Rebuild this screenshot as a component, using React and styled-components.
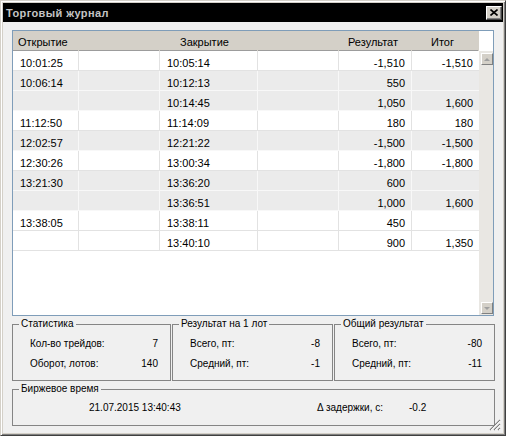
import React from 'react';
import styled, { createGlobalStyle } from 'styled-components';

const GlobalStyle = createGlobalStyle`
  html, body {
    margin: 0;
    padding: 0;
    background: #f0f0f0;
  }
  body {
    font-family: "Liberation Sans", Arial, sans-serif;
    color: #000;
  }
`;

const COLS = '66px 81px 98px 81px 73px 67px';

const Window = styled.div`
  position: relative;
  width: 506px;
  height: 436px;
  box-sizing: border-box;
  border: 1px solid;
  border-color: #d4d0c8 #404040 #404040 #d4d0c8;
  box-shadow: inset 1px 1px #ffffff, inset -1px -1px #808080;
  padding: 2px;
  background: #d4d0c8;
  display: flex;
  flex-direction: column;
`;

const TitleBar = styled.div`
  height: 19px;
  flex: none;
  background: #000;
  display: flex;
  align-items: center;
  justify-content: space-between;
  padding: 0 1px 0 3px;
`;

const Title = styled.span`
  font-size: 11px;
  font-weight: bold;
  letter-spacing: 0.4px;
  color: #c4c4c4;
`;

const CloseButton = styled.div`
  width: 16px;
  height: 14px;
  box-sizing: border-box;
  background: #d4d0c8;
  border: 1px solid;
  border-color: #ffffff #404040 #404040 #ffffff;
  box-shadow: inset -1px -1px #808080;
  display: flex;
  align-items: center;
  justify-content: center;
`;

const Body = styled.div`
  flex: 1;
  background: #f0f0f0;
  padding: 8px 9px 6px;
  display: flex;
  flex-direction: column;
`;

const TableBox = styled.div`
  width: 482px;
  height: 286px;
  box-sizing: border-box;
  border: 1px solid #7f9db9;
  background: #fff;
  display: flex;
`;

const Grid = styled.div`
  width: 466px;
  display: flex;
  flex-direction: column;
`;

const HeaderRow = styled.div`
  display: grid;
  grid-template-columns: ${COLS};
  background: #d4d0c8;
`;

const HeaderCell = styled.div`
  box-sizing: border-box;
  height: 20px;
  padding: 4px 0 0 ${p => p.$indent}px;
  line-height: 14px;
  font-size: 11px;
  white-space: nowrap;
  background: linear-gradient(#9c9c9c, #9c9c9c) 0 100% / calc(100% - 1px) 1px no-repeat;
`;

const Row = styled.div`
  display: grid;
  grid-template-columns: ${COLS};
  background: ${p => (p.$shade ? '#ebebeb' : '#ffffff')};
`;

const Cell = styled.div`
  box-sizing: border-box;
  height: 20px;
  padding: 5px 6px 0 7px;
  line-height: 14px;
  font-size: 11px;
  white-space: nowrap;
  text-align: ${p => (p.$right ? 'right' : 'left')};
  border-bottom: 1px solid ${p => (p.$shade ? '#f8f8f8' : '#e2e2e2')};
  border-right: 1px solid ${p => (p.$shade ? '#f8f8f8' : '#e2e2e2')};
  &:last-child {
    border-right: none;
  }
`;

const ScrollCol = styled.div`
  width: 14px;
  display: flex;
  flex-direction: column;
`;

const ScrollHead = styled.div`
  height: 20px;
  background: #fff;
`;

const ScrollTrack = styled.div`
  flex: 1;
  background: #e9e7e3;
  padding: 2px 0 1px 2px;
  display: flex;
  flex-direction: column;
  justify-content: space-between;
`;

const ScrollButton = styled.div`
  width: 12px;
  height: 12px;
  box-sizing: border-box;
  background: #d4d0c8;
  border: 1px solid;
  border-color: #ffffff #808080 #808080 #ffffff;
  display: flex;
  align-items: center;
  justify-content: center;
`;

const Arrow = styled.div`
  width: 0;
  height: 0;
  border-left: 3px solid transparent;
  border-right: 3px solid transparent;
  ${p => (p.$down ? 'border-top: 3px solid #a0a0a0;' : 'border-bottom: 3px solid #a0a0a0;')}
`;

const Groups = styled.div`
  margin-top: 2px;
  display: grid;
  grid-template-columns: 159px 161px 161px;
  column-gap: 1px;
`;

const Group = styled.fieldset`
  margin: 0;
  padding: 0;
  min-width: 0;
  box-sizing: border-box;
  height: ${p => p.$h}px;
  border: 1px solid #858585;
`;

const Legend = styled.legend`
  margin-left: 6px;
  padding: 0 2px;
  font-size: 10px;
  line-height: 12px;
`;

const StatList = styled.div`
  padding: 4px 12px 0 17px;
`;

const StatRow = styled.div`
  display: flex;
  justify-content: space-between;
  font-size: 10px;
  line-height: 20px;
`;

const TimeGroup = styled(Group)`
  margin-top: 2px;
  width: 483px;
`;

const TimeRow = styled.div`
  display: grid;
  grid-template-columns: 228px 92px 1fr;
  padding: 3px 0 0 76px;
  font-size: 10px;
  line-height: 20px;
`;

const Grip = styled.svg`
  position: absolute;
  right: 4px;
  bottom: 4px;
`;

const rows = [
  { s: false, c: ['10:01:25', '', '10:05:14', '', '-1,510', '-1,510'] },
  { s: true, c: ['10:06:14', '', '10:12:13', '', '550', ''] },
  { s: true, c: ['', '', '10:14:45', '', '1,050', '1,600'] },
  { s: false, c: ['11:12:50', '', '11:14:09', '', '180', '180'] },
  { s: true, c: ['12:02:57', '', '12:21:22', '', '-1,500', '-1,500'] },
  { s: false, c: ['12:30:26', '', '13:00:34', '', '-1,800', '-1,800'] },
  { s: true, c: ['13:21:30', '', '13:36:20', '', '600', ''] },
  { s: true, c: ['', '', '13:36:51', '', '1,000', '1,600'] },
  { s: false, c: ['13:38:05', '', '13:38:11', '', '450', ''] },
  { s: false, c: ['', '', '13:40:10', '', '900', '1,350'] },
];

const headers = [
  { t: 'Открытие', i: 5 },
  { t: '', i: 0 },
  { t: 'Закрытие', i: 20 },
  { t: '', i: 0 },
  { t: 'Результат', i: 9 },
  { t: 'Итог', i: 19 },
];

const groups = [
  { title: 'Статистика', items: [['Кол-во трейдов:', '7'], ['Оборот, лотов:', '140']] },
  { title: 'Результат на 1 лот', items: [['Всего, пт:', '-8'], ['Средний, пт:', '-1']] },
  { title: 'Общий результат', items: [['Всего, пт:', '-80'], ['Средний, пт:', '-11']] },
];

const App = () => (
  <>
    <GlobalStyle />
    <Window>
      <TitleBar>
        <Title>Торговый журнал</Title>
        <CloseButton>
          <svg width="8" height="7" viewBox="0 0 8 7">
            <path d="M0.5 0.5 L7.5 6.5 M7.5 0.5 L0.5 6.5" stroke="#000" strokeWidth="1.6" />
          </svg>
        </CloseButton>
      </TitleBar>
      <Body>
        <TableBox>
          <Grid>
            <HeaderRow>
              {headers.map((h, i) => (
                <HeaderCell key={i} $indent={h.i}>{h.t}</HeaderCell>
              ))}
            </HeaderRow>
            {rows.map((r, i) => (
              <Row key={i} $shade={r.s}>
                {r.c.map((v, j) => (
                  <Cell key={j} $shade={r.s} $right={j >= 4}>{v}</Cell>
                ))}
              </Row>
            ))}
          </Grid>
          <ScrollCol>
            <ScrollHead />
            <ScrollTrack>
              <ScrollButton><Arrow /></ScrollButton>
              <ScrollButton><Arrow $down /></ScrollButton>
            </ScrollTrack>
          </ScrollCol>
        </TableBox>
        <Groups>
          {groups.map(g => (
            <Group key={g.title} $h={63}>
              <Legend>{g.title}</Legend>
              <StatList>
                {g.items.map(([k, v]) => (
                  <StatRow key={k}>
                    <span>{k}</span>
                    <span>{v}</span>
                  </StatRow>
                ))}
              </StatList>
            </Group>
          ))}
        </Groups>
        <TimeGroup $h={43}>
          <Legend>Биржевое время</Legend>
          <TimeRow>
            <span>21.07.2015 13:40:43</span>
            <span>Δ задержки, с:</span>
            <span>-0.2</span>
          </TimeRow>
        </TimeGroup>
      </Body>
      <Grip width="12" height="12" viewBox="0 0 12 12">
        <path d="M11 1 L1 11 M11 5 L5 11 M11 9 L9 11" stroke="#808080" strokeWidth="1.2" />
        <path d="M11 2 L2 11 M11 6 L6 11 M11 10 L10 11" stroke="#ffffff" strokeWidth="0.8" />
      </Grip>
    </Window>
  </>
);

export default App;
